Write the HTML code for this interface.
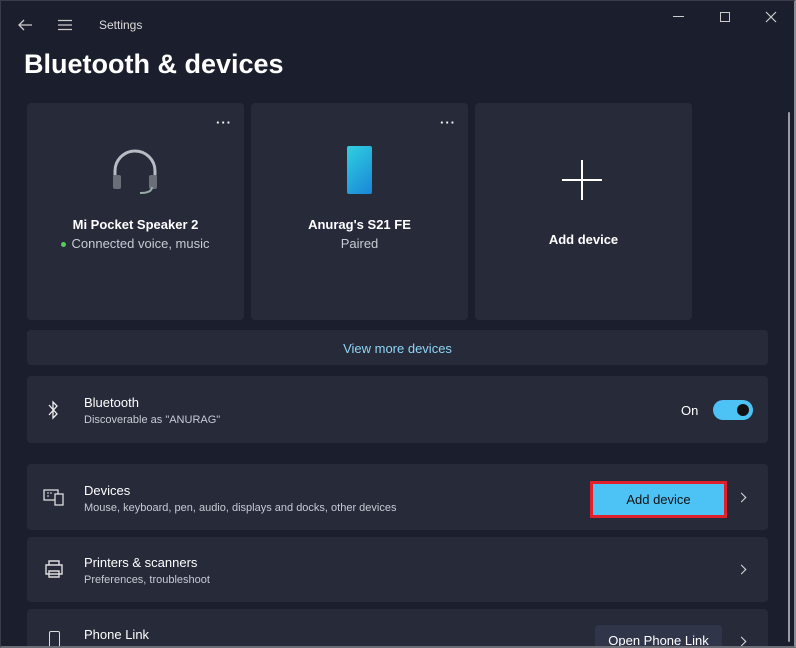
<!DOCTYPE html>
<html><head><style>
*{margin:0;padding:0;box-sizing:border-box}
html,body{width:796px;height:648px;overflow:hidden}
body{background:#1b1f2d;font-family:"Liberation Sans",sans-serif;color:#fff;position:relative}
.a{position:absolute}
.card{position:absolute;background:#262a39;border-radius:4px}
.t{font-size:13px;color:#fff}
.s{font-size:11px;color:#c8cbd3}
.chev{position:absolute;width:7px;height:7px;border-right:1.5px solid #ddd;border-top:1.5px solid #ddd;transform:rotate(45deg)}
</style></head><body>
<div class="a" style="left:0;top:0;width:796px;height:648px;border:1px solid #3a3d48;border-right:2px solid #8a8d95;border-bottom:2px solid #6a6d75;z-index:5"></div>
<svg class="a" style="left:17px;top:18px" width="16" height="14"><path d="M15 7H2M7 2L2 7l5 5" stroke="#ccc" stroke-width="1.3" fill="none"/></svg>
<svg class="a" style="left:57px;top:19px" width="16" height="12"><path d="M1 1.5h14M1 6h14M1 10.5h14" stroke="#ccc" stroke-width="1.2"/></svg>
<div class="a" style="left:99px;top:18px;font-size:12px;color:#ddd">Settings</div>
<div class="a" style="left:673px;top:16px;width:11px;height:1px;background:#ccc"></div>
<div class="a" style="left:720px;top:12px;width:10px;height:10px;border:1px solid #ccc"></div>
<svg class="a" style="left:765px;top:11px" width="12" height="12"><path d="M1 1l10 10M11 1L1 11" stroke="#ccc" stroke-width="1.2"/></svg>
<div class="a" style="left:24px;top:49px;font-size:27px;font-weight:bold">Bluetooth &amp; devices</div>
<div class="a" style="left:788px;top:112px;width:2px;height:530px;background:#9a9ca3;border-radius:1px"></div>

<div class="card" style="left:27px;top:103px;width:217px;height:217px">
 <div class="a" style="right:12px;top:12px;font-size:13px;font-weight:bold;letter-spacing:1px">···</div>
 <svg class="a" style="left:83px;top:42px" width="50" height="50"><path d="M5 38V26a20 20 0 0 1 40 0v12" stroke="#b8bcc5" stroke-width="3" fill="none"/><rect x="3" y="30" width="8" height="14" rx="2" fill="#6a6e78"/><rect x="39" y="30" width="8" height="14" rx="2" fill="#6a6e78"/><path d="M42 42q0 6-12 6" stroke="#9aa" stroke-width="2" fill="none"/></svg>
 <div class="a t" style="left:0;width:217px;text-align:center;top:114px;font-weight:bold">Mi Pocket Speaker 2</div>
 <div class="a" style="left:0;width:217px;text-align:center;top:133px;font-size:13px;color:#c8cbd3"><span style="display:inline-block;width:5px;height:5px;border-radius:50%;background:#5cc95c;vertical-align:middle;margin-right:5px"></span>Connected voice, music</div>
</div>
<div class="card" style="left:251px;top:103px;width:217px;height:217px">
 <div class="a" style="right:12px;top:12px;font-size:13px;font-weight:bold;letter-spacing:1px">···</div>
 <div class="a" style="left:96px;top:43px;width:25px;height:48px;border-radius:2px;background:linear-gradient(135deg,#2fd0e0,#1a86d8)"></div>
 <div class="a t" style="left:0;width:217px;text-align:center;top:114px;font-weight:bold">Anurag's S21 FE</div>
 <div class="a" style="left:0;width:217px;text-align:center;top:133px;font-size:13px;color:#c8cbd3">Paired</div>
</div>
<div class="card" style="left:475px;top:103px;width:217px;height:217px">
 <div class="a" style="left:87px;top:76px;width:40px;height:2px;background:#fff"></div>
 <div class="a" style="left:106px;top:57px;width:2px;height:40px;background:#fff"></div>
 <div class="a t" style="left:0;width:217px;text-align:center;top:129px;font-weight:bold">Add device</div>
</div>
<div class="card" style="left:27px;top:330px;width:741px;height:35px"><div class="a" style="left:0;width:741px;text-align:center;top:11px;font-size:13px;color:#8fd6f5">View more devices</div></div>

<div class="card" style="left:27px;top:376px;width:741px;height:67px">
 <svg class="a" style="left:20px;top:24px" width="12" height="20"><path d="M2 5l8 9-4 4V2l4 4-8 9" stroke="#eee" stroke-width="1.3" fill="none"/></svg>
 <div class="a t" style="left:57px;top:19px">Bluetooth</div>
 <div class="a s" style="left:57px;top:38px">Discoverable as "ANURAG"</div>
 <div class="a t" style="left:654px;top:27px">On</div>
 <div class="a" style="left:686px;top:24px;width:40px;height:20px;border-radius:10px;background:#4cc2f5"><div class="a" style="right:4px;top:4px;width:12px;height:12px;border-radius:50%;background:#111"></div></div>
</div>

<div class="card" style="left:27px;top:464px;width:741px;height:66px">
 <svg class="a" style="left:16px;top:24px" width="22" height="18"><rect x="1" y="2" width="14" height="10" fill="none" stroke="#ddd" stroke-width="1.3"/><rect x="12" y="6" width="8" height="11" fill="#262a39" stroke="#ddd" stroke-width="1.3"/><path d="M4 5h2M7 5h2M4 8h2" stroke="#ddd"/></svg>
 <div class="a t" style="left:57px;top:19px">Devices</div>
 <div class="a s" style="left:57px;top:38px">Mouse, keyboard, pen, audio, displays and docks, other devices</div>
 <div class="a" style="left:563px;top:17px;width:137px;height:37px;border:3px solid #e0202a;background:#4cc2f5"><div style="text-align:center;line-height:31px;font-size:13px;color:#111">Add device</div></div>
 <div class="chev" style="left:711px;top:30px"></div>
</div>
<div class="card" style="left:27px;top:537px;width:741px;height:65px">
 <svg class="a" style="left:16px;top:22px" width="22" height="20"><path d="M6 6V2h10v4M3 6h16v9H3zM6 12h10v6H6z" fill="#262a39" stroke="#ddd" stroke-width="1.4"/></svg>
 <div class="a t" style="left:57px;top:18px">Printers &amp; scanners</div>
 <div class="a s" style="left:57px;top:37px">Preferences, troubleshoot</div>
 <div class="chev" style="left:711px;top:29px"></div>
</div>
<div class="card" style="left:27px;top:609px;width:741px;height:39px;border-radius:4px 4px 0 0;overflow:hidden">
 <div class="a" style="left:22px;top:22px;width:11px;height:20px;border:1.4px solid #ddd;border-radius:2px"></div>
 <div class="a t" style="left:57px;top:18px">Phone Link</div>
 <div class="a" style="left:568px;top:16px;width:127px;height:32px;background:#31354a;border-radius:4px;font-size:13px;text-align:center;line-height:32px">Open Phone Link</div>
 <div class="chev" style="left:711px;top:29px"></div>
</div>
</body></html>
